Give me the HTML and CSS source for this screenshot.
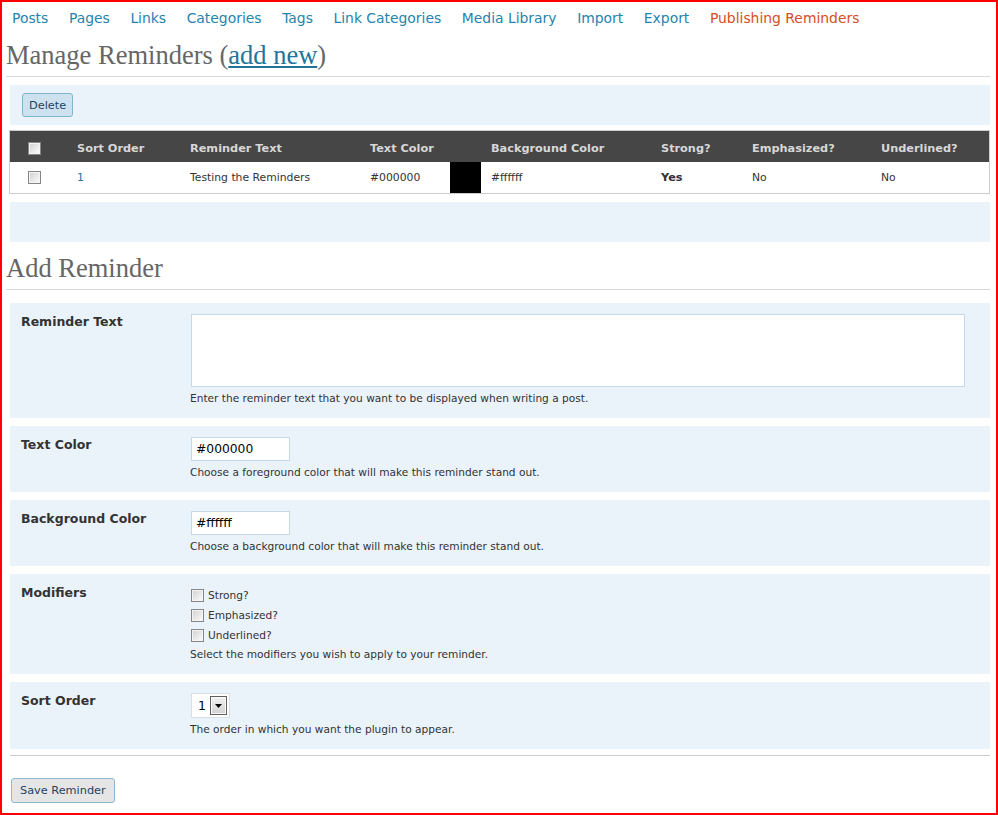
FILE: index.html
```html
<!DOCTYPE html>
<html>
<head>
<meta charset="utf-8">
<title>Manage Reminders</title>
<link rel="stylesheet" href="styles.css">
</head>
<body>
<div class="frame">
  <nav class="nav">
    <a href="#">Posts</a>
    <a href="#">Pages</a>
    <a href="#">Links</a>
    <a href="#">Categories</a>
    <a href="#">Tags</a>
    <a href="#">Link Categories</a>
    <a href="#">Media Library</a>
    <a href="#">Import</a>
    <a href="#">Export</a>
    <a href="#" class="current">Publishing Reminders</a>
  </nav>

  <h2 class="title">Manage Reminders (<a href="#">add new</a>)</h2>

  <div class="tablenav"><button class="btn btn-delete">Delete</button></div>

  <table class="list">
    <colgroup>
      <col class="c1"><col class="c2"><col class="c3"><col class="c4"><col class="c5"><col class="c6"><col class="c7"><col class="c8"><col class="c9">
    </colgroup>
    <thead>
      <tr>
        <th class="check"><input type="checkbox" class="cb"></th>
        <th>Sort Order</th>
        <th>Reminder Text</th>
        <th>Text Color</th>
        <th class="swatch-h"></th>
        <th>Background Color</th>
        <th>Strong?</th>
        <th>Emphasized?</th>
        <th>Underlined?</th>
      </tr>
    </thead>
    <tbody>
      <tr>
        <td class="check"><input type="checkbox" class="cb"></td>
        <td><a href="#">1</a></td>
        <td>Testing the Reminders</td>
        <td>#000000</td>
        <td class="swatch"></td>
        <td>#ffffff</td>
        <td class="yes">Yes</td>
        <td>No</td>
        <td>No</td>
      </tr>
    </tbody>
  </table>

  <div class="tablenav tablenav-bottom"></div>

  <h2 class="title">Add Reminder</h2>

  <div class="form">
    <div class="row">
      <div class="label">Reminder Text</div>
      <div class="field">
        <textarea class="textarea"></textarea>
        <div class="desc">Enter the reminder text that you want to be displayed when writing a post.</div>
      </div>
    </div>
    <div class="row">
      <div class="label">Text Color</div>
      <div class="field">
        <input class="text" type="text" value="#000000">
        <div class="desc">Choose a foreground color that will make this reminder stand out.</div>
      </div>
    </div>
    <div class="row">
      <div class="label">Background Color</div>
      <div class="field">
        <input class="text" type="text" value="#ffffff">
        <div class="desc">Choose a background color that will make this reminder stand out.</div>
      </div>
    </div>
    <div class="row">
      <div class="label">Modifiers</div>
      <div class="field">
        <div class="checks">
          <label class="check-line"><input type="checkbox" class="cb"><span>Strong?</span></label>
          <label class="check-line"><input type="checkbox" class="cb"><span>Emphasized?</span></label>
          <label class="check-line"><input type="checkbox" class="cb"><span>Underlined?</span></label>
        </div>
        <div class="desc">Select the modifiers you wish to apply to your reminder.</div>
      </div>
    </div>
    <div class="row">
      <div class="label">Sort Order</div>
      <div class="field">
        <div class="select">
          <span class="select-val">1</span>
          <span class="select-btn"><svg width="7" height="4" viewBox="0 0 7 4"><path d="M0 0H7L3.5 4Z" fill="#000"/></svg></span>
        </div>
        <div class="desc">The order in which you want the plugin to appear.</div>
      </div>
    </div>
  </div>

  <div class="sep"></div>

  <button class="btn btn-save">Save Reminder</button>
</div>
</body>
</html>
```
FILE: styles.css
```css
* { box-sizing: border-box; }
html, body { margin: 0; padding: 0; background: #fff; }
body { font-family: "DejaVu Sans", "Liberation Sans", sans-serif; color: #333; }

.frame {
  width: 998px;
  height: 815px;
  border: 2px solid #ff0000;
  padding: 0 6px 0 4px;
  overflow: hidden;
}

.nav {
  display: flex;
  gap: 20.6px;
  padding: 6px 0 0 6px;
  height: 27px;
  font-size: 13.9px;
  line-height: 20px;
}
.nav a { color: #2583ad; text-decoration: none; white-space: nowrap; }
.nav a.current { color: #d54e21; }

.title {
  font-family: "Liberation Serif", "Times New Roman", serif;
  font-size: 26.5px;
  font-weight: normal;
  color: #666;
  line-height: 32px;
  margin: 10px 0 0;
  padding-bottom: 5px;
  border-bottom: 1px solid #dadada;
}
.title a { color: #21759b; text-decoration: underline; }

.tablenav {
  margin: 8px 0 0 4px;
  height: 40px;
  background: #eaf2fa;
  padding: 8px 11px 0 12px;
}

.btn {
  font-family: "DejaVu Sans", sans-serif;
  font-size: 11.3px;
  color: #246;
  border: 1px solid #80b5d0;
  border-radius: 3px;
  cursor: pointer;
  display: block;
}
.btn-delete {
  height: 24px;
  padding: 0 6px;
  background: #cee1ef;
}
.btn-save {
  height: 25px;
  margin: 22px 0 0 5px;
  padding: 0 8px;
  background: #e5e5e5;
  border-color: #8cb8d2;
}

.list {
  margin: 5px 0 0 3px;
  width: 981px;
  border: 1px solid #ccc;
  border-collapse: separate;
  border-spacing: 0;
  table-layout: fixed;
}
.list .c1 { width: 57px; }
.list .c2 { width: 113px; }
.list .c3 { width: 180px; }
.list .c4 { width: 90px; }
.list .c5 { width: 31px; }
.list .c6 { width: 170px; }
.list .c7 { width: 91px; }
.list .c8 { width: 129px; }
.list .c9 { width: 118px; }

.list th {
  height: 31px;
  background: #464646;
  color: #d7d7d7;
  font-size: 11.3px;
  font-weight: bold;
  text-align: left;
  padding: 3px 10px 0;
  white-space: nowrap;
}
.list td {
  height: 31px;
  font-size: 10.8px;
  padding: 0 10px;
  background: #fff;
  white-space: nowrap;
}
.list td a { color: #21759b; text-decoration: none; }
.list th.check { padding: 3px 0 0 18px; }
.list td.check { padding: 0 0 0 18px; }
.list .swatch, .list .swatch-h { padding: 0; }
.list .swatch { background: #000; }
.list .yes { font-weight: bold; font-size: 11.3px; }

.cb {
  -webkit-appearance: none;
  appearance: none;
  display: block;
  width: 13px;
  height: 13px;
  margin: 0;
  border: 1px solid #868686;
  box-shadow: inset 0 0 0 1px #f4f4f4;
  background: linear-gradient(135deg, #cfcfcf, #fdfdfd);
}

.form {
  margin: 13px 0 0 4px;
  display: flex;
  flex-direction: column;
  gap: 8px;
}
.row {
  display: flex;
  background: #eaf2fa;
  padding: 11px 25px 12px 11px;
}
.label {
  width: 169px;
  flex: none;
  font-weight: bold;
  font-size: 12.5px;
  line-height: 16px;
  color: #333;
}
.field { flex: 1; min-width: 0; }

.textarea {
  display: block;
  width: calc(100% - 1px);
  height: 73px;
  margin: 0 0 0 1px;
  border: 1px solid #c6d9e9;
  background: #fff;
  resize: none;
}
.text {
  display: block;
  width: 99px;
  height: 24px;
  margin: 0 0 0 1px;
  padding: 0 4px;
  border: 1px solid #c6d9e9;
  background: #fff;
  font-family: "DejaVu Sans", sans-serif;
  font-size: 12.3px;
  color: #000;
}
.desc {
  margin-top: 3px;
  font-size: 10.6px;
  line-height: 16px;
  color: #333;
}

.checks { margin-bottom: -2px; }
.check-line {
  display: flex;
  align-items: center;
  gap: 4px;
  height: 20px;
  padding-left: 1px;
  font-size: 10.6px;
  color: #333;
}

.select {
  display: flex;
  align-items: center;
  width: 39px;
  height: 25px;
  margin: 0 0 1px 1px;
  padding: 0 2px 0 6px;
  border: 1px solid #d6e0e8;
  background: #fff;
  font-size: 12.5px;
  color: #000;
}
.select-btn {
  margin-left: auto;
  width: 17px;
  height: 19px;
  border: 1px solid #5f5f5f;
  box-shadow: inset 0 0 0 1px #fafafa;
  background: linear-gradient(#f2f2f2, #d2d2d2);
  display: flex;
  align-items: center;
  justify-content: center;
}
.select-btn svg { display: block; }

.sep {
  margin: 6px 0 0 4px;
  border-top: 1px solid #ccc;
}
```
